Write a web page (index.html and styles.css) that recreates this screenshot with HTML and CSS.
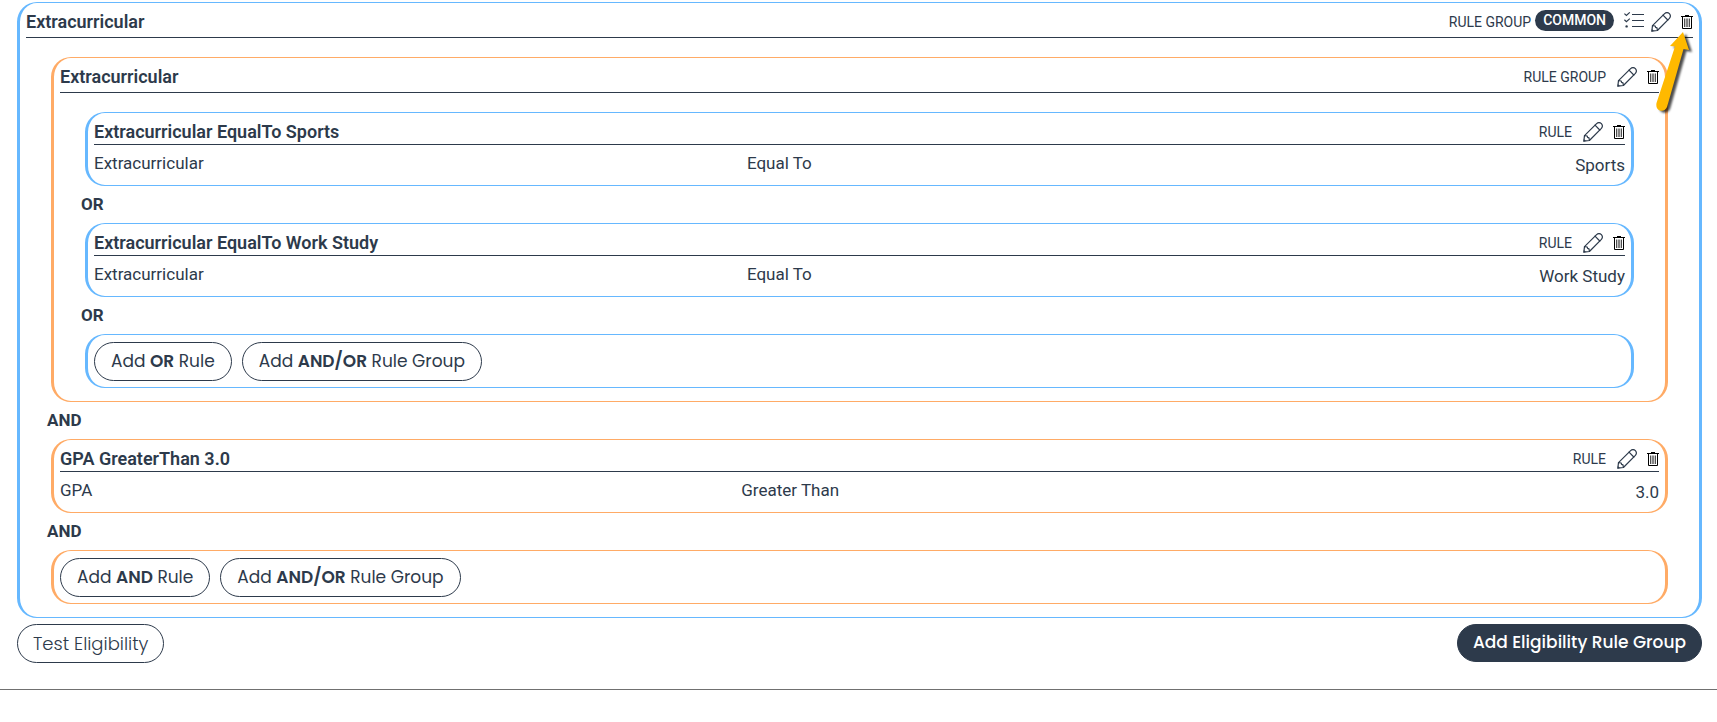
FILE: index.html
```html
<!DOCTYPE html>
<html lang="en">
<head>
  <meta charset="UTF-8" />
  <meta name="viewport" content="width=device-width, initial-scale=1.0"/>
  <title>Eligibility Rules</title>
  <link rel="stylesheet" href="styles.css">
</head>
<body>
  <svg class="sprite" aria-hidden="true">
    <symbol id="icon-pencil" viewBox="0 0 20 20">
      <g fill="none" stroke="currentColor" stroke-width="1.2" stroke-linejoin="round" stroke-linecap="round">
        <path d="M0.8 19.2 L1.5 13.6 L13.6 1.6 Q16 -0.4 18.4 1.6 Q20.4 4 18.4 6.4 L6.4 18.5 Z"/>
        <path d="M1.5 13.6 L4.2 14 L4.6 15.4 L6 15.8 L6.4 18.5"/>
        <path d="M12 3.2 L16.8 8"/>
      </g>
      <path fill="currentColor" d="M0.6 19.4 L0.9 17 L3 19.1 Z"/>
    </symbol>
    <symbol id="icon-trash" viewBox="0 0 12 14">
      <path fill="#000" d="M4 0h4v1h4v1H0V1h4z"/>
      <path fill="none" stroke="#000" d="M1.5 2V13.5H10.5V2"/>
      <path fill="none" stroke="#222" stroke-width="0.8" d="M3.5 3.5V12M5.2 3.5V12M6.8 3.5V12M8.5 3.5V12"/>
    </symbol>
    <symbol id="icon-checklist" viewBox="0 0 20 16">
      <g fill="none" stroke="currentColor" stroke-width="1.2">
        <path d="M8 2.5H20M8 8.5H20M8 14.5H20"/>
        <path d="M0.4 1.6L2.4 3.4L5.8 0.4M0.4 7.8L2.4 9.6L5.8 6.6"/>
      </g>
      <circle cx="2.6" cy="14.4" r="1.2" fill="currentColor"/>
    </symbol>
  </svg>

  <main class="rules-page">
    <section class="rule-box group blue">
      <header class="box-header">
        <h2>Extracurricular</h2>
        <div class="box-tools">
          <span class="kind">RULE GROUP</span>
          <span class="badge">COMMON</span>
          <button class="icon-btn list" aria-label="Criteria"><svg><use href="#icon-checklist"/></svg></button>
          <button class="icon-btn edit" aria-label="Edit"><svg><use href="#icon-pencil"/></svg></button>
          <button class="icon-btn delete" aria-label="Delete"><svg><use href="#icon-trash"/></svg></button>
        </div>
      </header>
      <div class="box-children">
        <section class="rule-box group orange">
          <header class="box-header">
            <h2>Extracurricular</h2>
            <div class="box-tools">
              <span class="kind">RULE GROUP</span>
              <button class="icon-btn edit" aria-label="Edit"><svg><use href="#icon-pencil"/></svg></button>
              <button class="icon-btn delete" aria-label="Delete"><svg><use href="#icon-trash"/></svg></button>
            </div>
          </header>
          <div class="box-children">
            <section class="rule-box blue">
              <header class="box-header">
                <h2>Extracurricular EqualTo Sports</h2>
                <div class="box-tools">
                  <span class="kind">RULE</span>
                  <button class="icon-btn edit" aria-label="Edit"><svg><use href="#icon-pencil"/></svg></button>
                  <button class="icon-btn delete" aria-label="Delete"><svg><use href="#icon-trash"/></svg></button>
                </div>
              </header>
              <div class="rule-row">
                <span class="field">Extracurricular</span>
                <span class="operator">Equal To</span>
                <span class="value">Sports</span>
              </div>
            </section>
            <div class="joiner">OR</div>
            <section class="rule-box blue">
              <header class="box-header">
                <h2>Extracurricular EqualTo Work Study</h2>
                <div class="box-tools">
                  <span class="kind">RULE</span>
                  <button class="icon-btn edit" aria-label="Edit"><svg><use href="#icon-pencil"/></svg></button>
                  <button class="icon-btn delete" aria-label="Delete"><svg><use href="#icon-trash"/></svg></button>
                </div>
              </header>
              <div class="rule-row">
                <span class="field">Extracurricular</span>
                <span class="operator">Equal To</span>
                <span class="value">Work Study</span>
              </div>
            </section>
            <div class="joiner">OR</div>
            <div class="rule-box actions blue">
              <button class="btn">Add <b>OR</b> Rule</button>
              <button class="btn">Add <b>AND/OR</b> Rule Group</button>
            </div>
          </div>
        </section>
        <div class="joiner">AND</div>
        <section class="rule-box orange">
          <header class="box-header">
            <h2>GPA GreaterThan 3.0</h2>
            <div class="box-tools">
              <span class="kind">RULE</span>
              <button class="icon-btn edit" aria-label="Edit"><svg><use href="#icon-pencil"/></svg></button>
              <button class="icon-btn delete" aria-label="Delete"><svg><use href="#icon-trash"/></svg></button>
            </div>
          </header>
          <div class="rule-row">
            <span class="field">GPA</span>
            <span class="operator">Greater Than</span>
            <span class="value">3.0</span>
          </div>
        </section>
        <div class="joiner">AND</div>
        <div class="rule-box actions orange">
          <button class="btn">Add <b>AND</b> Rule</button>
          <button class="btn">Add <b>AND/OR</b> Rule Group</button>
        </div>
      </div>
    </section>
    <div class="page-actions">
      <button class="btn test">Test Eligibility</button>
      <button class="btn primary">Add Eligibility Rule Group</button>
    </div>
    <svg class="pointer" viewBox="0 0 40 86" aria-hidden="true">
      <path d="M28 2 L34 20 L28.5 19 L12 77 Q10 81.500 5 80.500 Q0.500 79 1.500 73 L20 16.500 L15 16 Z"/>
    </svg>
  </main>
  <hr class="divider">
</body>
</html>
```
FILE: styles.css
```css
* { margin: 0; padding: 0; box-sizing: border-box; }
body {
  font-family: Roboto, "Liberation Sans", sans-serif;
  font-size: 17px;
  line-height: 24px;
  color: #2d3a4b;
  background: #fff;
}
.sprite { position: absolute; width: 0; height: 0; }
.rules-page {
  position: relative;
  padding: 2px 15px 0 17px;
}

/* boxes */
.rule-box {
  border: 1px solid;
  border-left-width: 3px;
  border-right-width: 3px;
  border-radius: 20px;
  padding: 0 6px;
}
.blue { border-color: #66b8ff; }
.orange { border-color: #ffab66; }
.box-header {
  display: flex;
  justify-content: space-between;
  align-items: center;
  height: 32px;
  padding-top: 6px;
  border-bottom: 1px solid #2d3a4b;
}
.group > .box-header { height: 35px; padding-top: 3px; }
.box-header h2 { font-size: 18px; line-height: 24px; font-weight: 600; }
.box-children { padding: 19px 25px 13px; }
.box-tools { display: flex; align-items: center; }
.kind { font-size: 14px; line-height: 20px; margin-right: 11px; }
.badge {
  height: 21px;
  padding: 0 8px;
  margin: 0 10px 2px -7px;
  border-radius: 11px;
  background: #2d3a4b;
  color: #fff;
  font-size: 14px;
  line-height: 20px;
  font-weight: 500;
}
.icon-btn {
  display: flex;
  border: none;
  background: none;
  color: #2d3a4b;
  cursor: pointer;
}
.icon-btn svg { width: 20px; height: 20px; }
.icon-btn.list { margin: 0 7px 4px 0; }
.icon-btn.list svg { height: 16px; }
.icon-btn.delete { margin-left: 10px; }
.icon-btn.delete svg { width: 12px; height: 14px; }

.rule-row {
  display: flex;
  height: 40px;
  padding-top: 6px;
}
.field { width: calc(100% * 5 / 12); }
.operator { flex: 1; padding-left: 15px; }
.value { padding-top: 2px; }
.joiner {
  height: 37px;
  margin-left: -4px;
  line-height: 37px;
  font-weight: 700;
}

/* buttons */
.actions {
  display: flex;
  gap: 10px;
  padding-top: 7px;
  padding-bottom: 6px;
}
.btn {
  height: 39px;
  padding: 0 16px 2px;
  border: 1px solid #2d3a4b;
  border-radius: 20px;
  background: #fff;
  color: #2d3a4b;
  font-family: Poppins, Inter, sans-serif;
  font-size: 17px;
  line-height: 24px;
  font-weight: 400;
  cursor: pointer;
}
.btn b { font-weight: 600; }
.btn.test { padding: 0 15px; font-size: 18px; font-weight: 300; }
.btn.primary {
  height: 38px;
  padding: 0 15px 2px;
  background: #2d3a4b;
  color: #fff;
  font-weight: 500;
}
.page-actions {
  display: flex;
  justify-content: space-between;
  padding: 6px 0 26px;
}

.pointer {
  position: absolute;
  top: 30px;
  right: 22px;
  width: 40px;
  height: 86px;
  pointer-events: none;
  filter: drop-shadow(3px 2px 1px rgba(0,0,0,0.7));
}
.pointer path { fill: #ffb900; }
.divider { border: none; border-top: 1px solid #707070; }
```
